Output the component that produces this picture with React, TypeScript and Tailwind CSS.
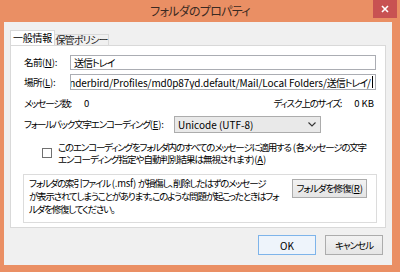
import React from 'react';

const jp = "font-['Noto_Sans_CJK_JP','Noto_Sans',sans-serif] [font-feature-settings:'palt']";

const L: React.FC<{ children: React.ReactNode }> = ({ children }) => (
  <span className="tracking-[-0.2px]">{children}</span>
);

const Label: React.FC<{ text: string; k: string; tail?: string }> = ({ text, k, tail = ':' }) => (
  <span>
    {text}
    <L>
      (<span className="underline">{k}</span>){tail}
    </L>
  </span>
);

const App: React.FC = () => {
  return (
    <div className={`w-[400px] h-[272px] bg-[#ea8f64] flex flex-col overflow-hidden text-[9.5px] tracking-[-1.2px] text-black whitespace-nowrap ${jp}`}>
      {/* title bar */}
      <div className="relative h-[22px] flex items-center justify-center">
        <span className="text-[12px] text-[#3a2a22] tracking-[-0.7px]">フォルダのプロパティ</span>
        <div className="absolute right-[3px] top-0 w-[24px] h-[18px] bg-[#c85252] flex items-center justify-center">
          <svg width="8" height="8" viewBox="0 0 8 8">
            <path d="M1 1L7 7M7 1L1 7" stroke="#ffffff" strokeWidth="1.6" />
          </svg>
        </div>
      </div>

      {/* client */}
      <div className="ml-[4px] w-[388px] h-[243px] bg-[#f0f0f0] flex flex-col">
        {/* tabs */}
        <div className="mt-[9px] ml-[6px] flex items-end h-[14px] relative z-10">
          <div className="h-[15px] w-[45px] bg-white border border-b-0 border-[#d9d9d9] flex items-center justify-center leading-none text-[10px] tracking-[-0.3px]">
            一般情報
          </div>
          <div className="h-[11px] w-[54px] bg-[#f0f0f0] border border-l-0 border-b-0 border-[#d9d9d9] flex items-center justify-center leading-none text-[10px] tracking-[-0.8px] text-[#222]">
            保管ポリシー
          </div>
        </div>

        {/* panel */}
        <div className="ml-[6px] w-[376px] h-[183px] bg-white border border-[#d9d9d9] flex flex-col pl-[13px] pr-[9px] pt-[9px]">
          {/* name */}
          <div className="flex items-center h-[15px]">
            <span className="w-[46px] tracking-[-0.5px]"><Label text="名前" k="N" /></span>
            <div className="w-[306px] h-[15px] border border-[#abadb3] bg-white flex items-center pl-[3px] text-[10px] tracking-[-1px]">
              送信トレイ
            </div>
          </div>
          {/* location */}
          <div className="flex items-center h-[16px] mt-[4px]">
            <span className="w-[46px] tracking-[-0.5px]"><Label text="場所" k="L" /></span>
            <div className="w-[306px] h-[16px] border border-[#abadb3] bg-white flex items-center justify-end overflow-hidden pr-[2px] text-[10px]">
              <span className="shrink-0 tracking-[-0.08px]">nderbird/Profiles/md0p87yd.default/Mail/Local Folders/</span>
              <span className="shrink-0 tracking-[-1px]">送信トレイ</span>
              <span className="shrink-0 tracking-normal">/</span>
              <span className="w-[1px] h-[12px] bg-black ml-[1px] shrink-0" />
            </div>
          </div>
          {/* counts */}
          <div className="flex items-center justify-between w-[352px] h-[14px] mt-[6px] pr-[2px]">
            <span>メッセージ数<L>:</L><span className="inline-block w-[12px]" /><span className="tracking-normal">0</span></span>
            <span>ディスク上のサイズ<L>:</L><span className="inline-block w-[12px]" /><span className="tracking-normal">0 KB</span></span>
          </div>
          {/* encoding */}
          <div className="flex items-center h-[17px] mt-[6px]">
            <span className="w-[150px]"><Label text="フォールバック文字エンコーディング" k="E" /></span>
            <div className="w-[147px] h-[17px] border border-[#acacac] bg-[#e9e9e9] flex items-center justify-between pl-[3px] pr-[4px] text-[10px] tracking-normal">
              <span>Unicode (UTF-8)</span>
              <svg width="8" height="5" viewBox="0 0 8 5">
                <path d="M0.5 0.5L4 4L7.5 0.5" stroke="#333" strokeWidth="1.1" fill="none" />
              </svg>
            </div>
          </div>
          {/* checkbox */}
          <div className="flex items-start mt-[8px] pl-[18px]">
            <div className="w-[10px] h-[10px] border border-[#707070] bg-white mt-[7px] shrink-0" />
            <div className="ml-[6px] leading-[12px]">
              <div>このエンコーディングをフォルダ内のすべてのメッセージに適用する<L> (</L>各メッセージの文字</div>
              <div className="tracking-[-1px]">エンコーディング指定や自動判別結果は無視されます<L>)(<span className="underline">A</span>)</L></div>
            </div>
          </div>
          {/* info box */}
          <div className="mt-[9px] -ml-[1px] w-[354px] h-[49px] border border-[#dcdcdc] bg-white flex items-start">
            <div className="w-[263px] pl-[5px] pt-[2px] leading-[13px]">
              <div>フォルダの索引ファイル<L> (.msf) </L>が損傷し、削除したはずのメッセージ</div>
              <div>が表示されてしまうことがあります。このような問題が起こったときはフォ</div>
              <div>ルダを修復してください。</div>
            </div>
            <div className="ml-[5px] mt-[4px] w-[75px] h-[19px] border border-[#acacac] bg-gradient-to-b from-[#f2f2f2] to-[#e5e5e5] flex items-center justify-center tracking-[-0.9px]">
              <Label text="フォルダを修復" k="R" tail="" />
            </div>
          </div>
        </div>

        {/* buttons */}
        <div className="flex justify-end gap-[9px] mt-[7px] pr-[9px]">
          <div className="w-[58px] h-[20px] border border-[#7eb4ea] bg-[#eef4fb] flex items-center justify-center text-[10px] tracking-normal">OK</div>
          <div className="w-[58px] h-[20px] border border-[#acacac] bg-gradient-to-b from-[#f2f2f2] to-[#e5e5e5] flex items-center justify-center tracking-[-1px]">
            キャンセル
          </div>
        </div>
      </div>
    </div>
  );
};

export default App;
